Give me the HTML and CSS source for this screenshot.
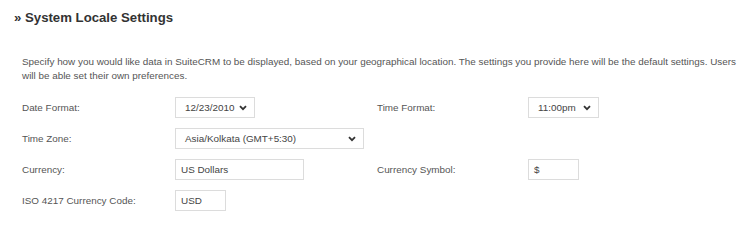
FILE: index.html
```html
<!DOCTYPE html>
<html>
<head>
<meta charset="utf-8">
<link rel="stylesheet" href="styles.css">
</head>
<body>
<h2 class="title">» System Locale Settings</h2>
<p class="desc">Specify how you would like data in SuiteCRM to be displayed, based on your geographical location. The settings you provide here will be the default settings. Users will be able set their own preferences.</p>
<div class="grid">
  <div class="label">Date Format:</div>
  <div class="field"><div class="select w-date"><span>12/23/2010</span><svg class="chev" width="8" height="6" viewBox="0 0 8 6"><path d="M1 1.2 L4 4.2 L7 1.2" fill="none" stroke="#333" stroke-width="1.8"/></svg></div></div>
  <div class="label">Time Format:</div>
  <div class="field"><div class="select w-time"><span>11:00pm</span><svg class="chev" width="8" height="6" viewBox="0 0 8 6"><path d="M1 1.2 L4 4.2 L7 1.2" fill="none" stroke="#333" stroke-width="1.8"/></svg></div></div>

  <div class="label">Time Zone:</div>
  <div class="field span3"><div class="select w-tz"><span>Asia/Kolkata (GMT+5:30)</span><svg class="chev" width="8" height="6" viewBox="0 0 8 6"><path d="M1 1.2 L4 4.2 L7 1.2" fill="none" stroke="#333" stroke-width="1.8"/></svg></div></div>

  <div class="label">Currency:</div>
  <div class="field"><div class="input w-cur">US Dollars</div></div>
  <div class="label">Currency Symbol:</div>
  <div class="field"><div class="input w-sym">$</div></div>

  <div class="label">ISO 4217 Currency Code:</div>
  <div class="field"><div class="input w-iso">USD</div></div>
</div>
</body>
</html>
```
FILE: styles.css
```css
html, body {
  margin: 0;
  padding: 0;
  background: #ffffff;
}
body {
  font-family: "Liberation Sans", Arial, sans-serif;
  font-size: 9.9px;
  color: #555555;
}
.title {
  margin: 0;
  padding: 9px 0 0 14px;
  font-size: 13.2px;
  line-height: 17px;
  font-weight: bold;
  color: #333333;
}
.desc {
  margin: 29px 0 0 22px;
  width: 718px;
  line-height: 14px;
  color: #555555;
}
.grid {
  display: grid;
  grid-template-columns: 153px 202px 151px auto;
  grid-auto-rows: 21px;
  row-gap: 10px;
  margin: 14px 0 0 22px;
}
.label {
  display: flex;
  align-items: center;
  color: #555555;
}
.field {
  display: flex;
  align-items: center;
}
.span3 {
  grid-column: 2 / span 3;
}
.select, .input {
  box-sizing: border-box;
  height: 21px;
  border: 1px solid #dcdcdc;
  background: #ffffff;
  display: flex;
  align-items: center;
  color: #444444;
}
.select {
  justify-content: space-between;
  padding: 0 7px 0 9px;
}
.input {
  padding: 0 5px;
}
.chev {
  display: block;
  flex: none;
}
.w-date { width: 80px; }
.w-time { width: 71px; }
.w-tz { width: 189px; }
.w-cur { width: 129px; }
.w-sym { width: 51px; }
.w-iso { width: 51px; }
```
